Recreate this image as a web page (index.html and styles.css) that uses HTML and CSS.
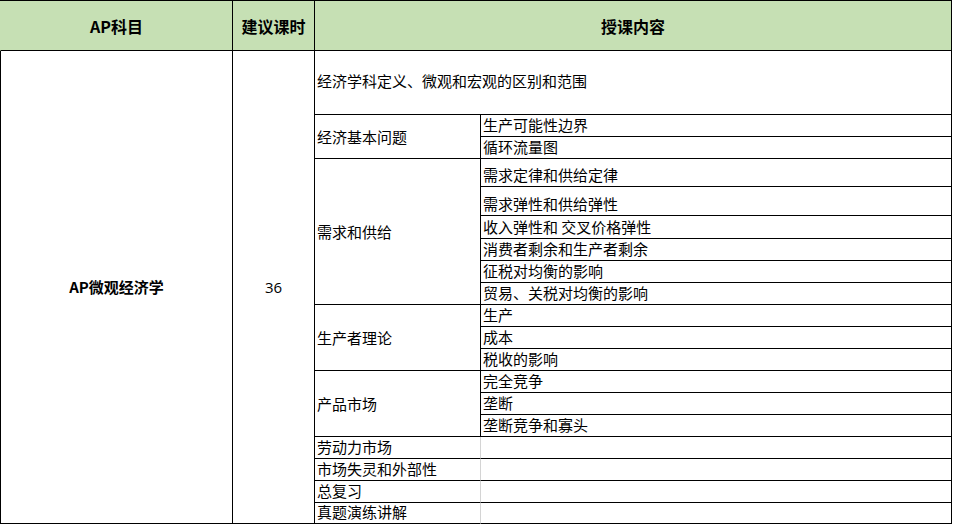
FILE: index.html
```html
<!DOCTYPE html>
<html lang="zh-CN">
<head>
<meta charset="utf-8">
<title>AP微观经济学 课程安排</title>
<link rel="stylesheet" href="styles.css">
</head>
<body>
<div class="sheet">
  <div class="c hd first">AP科目</div>
  <div class="c hd">建议课时</div>
  <div class="c hd wide">授课内容</div>

  <div class="c first mid bold span19">AP微观经济学</div>
  <div class="c mid span19 num">36</div>
  <div class="c wide vmid top">经济学科定义、微观和宏观的区别和范围</div>

  <div class="c vmid span2">经济基本问题</div>
  <div class="c sub">生产可能性边界</div>
  <div class="c sub">循环流量图</div>

  <div class="c vmid span6">需求和供给</div>
  <div class="c sub">需求定律和供给定律</div>
  <div class="c sub">需求弹性和供给弹性</div>
  <div class="c sub">收入弹性和 交叉价格弹性</div>
  <div class="c sub">消费者剩余和生产者剩余</div>
  <div class="c sub">征税对均衡的影响</div>
  <div class="c sub">贸易、关税对均衡的影响</div>

  <div class="c vmid span3">生产者理论</div>
  <div class="c sub">生产</div>
  <div class="c sub">成本</div>
  <div class="c sub">税收的影响</div>

  <div class="c vmid span3">产品市场</div>
  <div class="c sub">完全竞争</div>
  <div class="c sub">垄断</div>
  <div class="c sub">垄断竞争和寡头</div>

  <div class="c sub soft">劳动力市场</div>
  <div class="c sub"></div>
  <div class="c sub soft">市场失灵和外部性</div>
  <div class="c sub"></div>
  <div class="c sub soft">总复习</div>
  <div class="c sub"></div>
  <div class="c sub soft">真题演练讲解</div>
  <div class="c sub"></div>
</div>
</body>
</html>
```

FILE: styles.css
```css
* {
  box-sizing: border-box;
}

html, body {
  margin: 0;
  padding: 0;
  background: #ffffff;
}

body {
  font-family: "Noto Sans CJK SC", "Noto Sans", sans-serif;
  font-size: 15px;
  color: #000000;
}

.sheet {
  display: grid;
  width: 952px;
  grid-template-columns: 233px 82px 166px 471px;
  grid-template-rows: 50px 64px 22px 22px 28px 29px 23px 22px 22px 22px 22px 22px 22px 22px 22px 22px 22px 22px 22px 21px;
  border-top: 1px solid #000000;
}

.c {
  display: flex;
  border-right: 1px solid #000000;
  border-bottom: 1px solid #000000;
  line-height: 18px;
  white-space: nowrap;
}

.first {
  border-left: 1px solid #000000;
}

.hd {
  background: #c6e0b4;
  font-weight: bold;
  font-size: 16px;
  justify-content: center;
  align-items: center;
}

.hd.first {
  border-left-color: #c6e0b4;
}

.wide {
  grid-column: span 2;
}

.mid {
  justify-content: center;
  align-items: center;
}

.bold {
  font-weight: bold;
}

.num {
  font-family: "Open Sans", "Noto Sans", sans-serif;
  font-size: 15px;
}

.vmid {
  align-items: center;
  padding-left: 2px;
}

.top {
  padding-bottom: 3px;
}

.sub {
  align-items: flex-end;
  padding: 0 2px 2px 2px;
}

.soft {
  border-right-color: #d4d4d4;
}

.span2 { grid-row: span 2; }
.span3 { grid-row: span 3; }
.span6 { grid-row: span 6; }
.span19 { grid-row: span 19; }
```
